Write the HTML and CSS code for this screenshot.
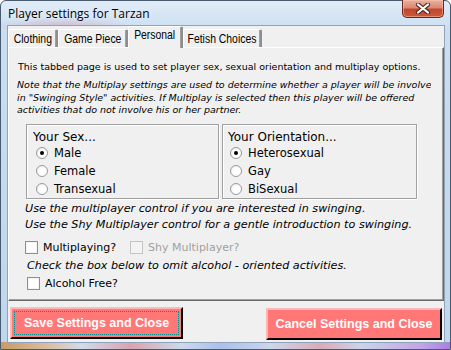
FILE: index.html
```html
<!DOCTYPE html>
<html lang="en">
<head>
    <meta charset="UTF-8">
    <title>Player settings for Tarzan</title>
    <link rel="stylesheet" href="styles.css">
</head>
<body>
    <div class="window">
        <div class="titlebar">
            <span class="title">Player settings for Tarzan</span>
            <div class="close-btn">
                <svg width="16" height="11" viewBox="0 0 16 11">
                    <path d="M3 1.5 L13 9.5 M13 1.5 L3 9.5" stroke="#4a2a24" stroke-width="4.2" stroke-linecap="round"/>
                    <path d="M3 1.5 L13 9.5 M13 1.5 L3 9.5" stroke="#ffffff" stroke-width="2.2" stroke-linecap="round"/>
                </svg>
            </div>
        </div>

        <div class="client">
            <div class="tabs">
                <div class="tab tab-clothing"><span>Clothing</span></div>
                <div class="tab tab-piece"><span>Game Piece</span></div>
                <div class="tab tab-personal active"><span>Personal</span></div>
                <div class="tab tab-fetish"><span>Fetish Choices</span></div>
            </div>

            <div class="tab-page">
                <p class="intro">This tabbed page is used to set player sex, sexual orientation and multiplay options.</p>
                <p class="note">Note that the Multiplay settings are used to determine whether a player will be involved<br>in "Swinging Style" activities. If Multiplay is selected then this player will be offered<br>activities that do not involve his or her partner.</p>

                <div class="groups">
                    <div class="group group-sex">
                        <div class="group-title">Your Sex...</div>
                        <label class="radio-row"><span class="radio checked"></span>Male</label>
                        <label class="radio-row"><span class="radio"></span>Female</label>
                        <label class="radio-row"><span class="radio"></span>Transexual</label>
                    </div>
                    <div class="group group-orient">
                        <div class="group-title">Your Orientation...</div>
                        <label class="radio-row"><span class="radio checked"></span>Heterosexual</label>
                        <label class="radio-row"><span class="radio"></span>Gay</label>
                        <label class="radio-row"><span class="radio"></span>BiSexual</label>
                    </div>
                </div>

                <p class="hint hint-multi">Use the multiplayer control if you are interested in swinging.</p>
                <p class="hint hint-shy">Use the Shy Multiplayer control for a gentle introduction to swinging.</p>

                <div class="check-row">
                    <label class="check"><span class="box"></span>Multiplaying?</label>
                    <label class="check disabled"><span class="box"></span>Shy Multiplayer?</label>
                </div>

                <p class="hint hint-alcohol">Check the box below to omit alcohol - oriented activities.</p>

                <div class="check-row alcohol-row">
                    <label class="check"><span class="box"></span>Alcohol Free?</label>
                </div>
            </div>

            <div class="buttons">
                <div class="btn btn-save"><span class="focus">Save Settings and Close</span></div>
                <div class="btn btn-cancel">Cancel Settings and Close</div>
            </div>
        </div>
    </div>
</body>
</html>
```

FILE: styles.css
```css
/* Base */
* {
    box-sizing: border-box;
    margin: 0;
    padding: 0;
}

body {
    width: 451px;
    height: 350px;
    overflow: hidden;
    font-family: "DejaVu Sans", Verdana, sans-serif;
    color: #000;
}

/* Window frame (Vista glass) */
.window {
    width: 451px;
    height: 350px;
    border: 1px solid #4a5a6e;
    border-radius: 6px 6px 0 0;
    background:
        radial-gradient(ellipse 70px 9px at 60px 25px, rgba(214, 120, 140, 0.35), rgba(214, 120, 140, 0)),
        linear-gradient(90deg, #c99a66 0px, #dcc0a4 50px, #cfdcec 80px, #dba2ae 130px, #ccdaec 180px, #abc0ea 220px, #ccd6ec 270px, #dcaab6 320px, #cad4ea 360px, #c4a4e6 420px, #a87ce4 451px) 0 341px / 100% 9px no-repeat,
        linear-gradient(180deg, #e0ecf8 0px, #cadef1 30px, #bfd6ec 340px);
    display: flex;
    flex-direction: column;
}

.titlebar {
    height: 25px;
    display: flex;
    align-items: flex-start;
    justify-content: space-between;
}

.title {
    font-family: "Open Sans", "Liberation Sans", sans-serif;
    font-size: 12px;
    margin: 4px 0 0 7px;
    color: #000;
    text-shadow: 0 0 6px rgba(255, 255, 255, 0.9);
}

.close-btn {
    width: 42px;
    height: 18px;
    margin: -1px 6px 0 0;
    border: 1px solid #6a2418;
    border-top: none;
    border-radius: 0 0 5px 5px;
    background: linear-gradient(180deg, #e8b0a0 0%, #d98a74 45%, #c4462e 55%, #c75a3c 100%);
    box-shadow: inset 0 0 0 1px rgba(255, 200, 180, 0.5);
    display: flex;
    align-items: center;
    justify-content: center;
}

/* Client area */
.client {
    width: 436px;
    height: 316px;
    margin-left: 7px;
    background: #f0f0f0;
    outline: 1px solid #8fa4bb;
    display: flex;
    flex-direction: column;
}

/* Tabs */
.tabs {
    height: 21px;
    display: flex;
    align-items: flex-end;
    font-family: "Liberation Sans", Arial, sans-serif;
    font-size: 13px;
    position: relative;
    z-index: 1;
}

.tab {
    height: 18px;
    border-top: 1px solid #fff;
    border-left: 1px solid #fff;
    border-right: 2px solid #8e8e8e;
    border-radius: 2px 2px 0 0;
    box-shadow: inset -1px 0 0 #a0a0a0;
    padding-top: 1px;
    text-align: center;
    white-space: nowrap;
    background: #f0f0f0;
    display: flex;
    justify-content: center;
}

.tab span {
    display: inline-block;
    transform: scaleX(0.8);
}

.tab-clothing { width: 50px; }
.tab-piece { width: 70px; }
.tab-personal { width: 55px; }
.tab-fetish { width: 79px; }

.tab.active {
    height: 22px;
    margin-bottom: -1px;
    padding-top: 0;
}

/* Tab page */
.tab-page {
    height: 254px;
    border-top: 1px solid #fff;
    border-left: 1px solid #fff;
    border-right: 1px solid #696969;
    border-bottom: 1px solid #696969;
    box-shadow: inset -1px -1px 0 #a0a0a0;
    font-size: 9.5px;
}

.intro {
    margin: 12px 0 0 9px;
    line-height: 13px;
    white-space: nowrap;
}

.note {
    margin: 6px 0 0 8px;
    width: 414px;
    height: 38px;
    overflow: hidden;
    white-space: nowrap;
    font-style: italic;
    line-height: 12.5px;
}

/* Group boxes */
.groups {
    display: flex;
    gap: 3px;
    margin: 7px 0 0 17px;
    font-size: 11.5px;
}

.group {
    height: 75px;
    border: 1px solid #a0a0a0;
    box-shadow: 1px 1px 0 #fff, inset 1px 1px 0 #fff;
    display: flex;
    flex-direction: column;
}

.group-sex { width: 193px; padding-left: 6px; }
.group-orient { width: 195px; padding-left: 5px; }

.group-title {
    margin-top: 6px;
    line-height: 13px;
    height: 13px;
    font-size: 12px;
}

.radio-row {
    height: 18.5px;
    display: flex;
    align-items: center;
}

.group-sex .radio-row { padding-left: 3px; }
.group-orient .radio-row { padding-left: 2px; }

.radio {
    width: 12px;
    height: 12px;
    margin-right: 6px;
    border-radius: 50%;
    border: 1px solid #9a9a9a;
    background: radial-gradient(circle at 60% 60%, #ffffff 40%, #e4e4e4 100%);
    position: relative;
}

.radio.checked::after {
    content: "";
    position: absolute;
    left: 3px;
    top: 3px;
    width: 4px;
    height: 4px;
    border-radius: 50%;
    background: #000;
}

/* Hints and checkboxes */
.hint {
    font-style: italic;
    font-size: 11.2px;
    line-height: 16px;
    white-space: nowrap;
}

.hint-multi { margin: 2px 0 0 16px; }
.hint-shy { margin-left: 16px; }
.hint-alcohol { margin: 1px 0 0 18px; }

.check-row {
    display: flex;
    height: 19px;
    align-items: center;
    margin: 5px 0 0 16px;
    font-size: 11px;
}

.alcohol-row { margin: 0 0 0 18px; }

.check {
    display: flex;
    align-items: center;
    margin-right: 14px;
}

.box {
    width: 13px;
    height: 13px;
    margin-right: 5px;
    border: 1px solid #8e8f8f;
    background: #fff;
    box-shadow: inset 0 0 0 1px #f4f4f4;
}

.check.disabled {
    color: #a0a0a0;
}

.check.disabled .box {
    border-color: #c4c4c4;
    background: #f4f4f4;
}

/* Bottom buttons */
.buttons {
    display: flex;
    justify-content: space-between;
    padding: 6px 2px 0 2px;
}

.btn {
    height: 32px;
    background: #ff7777;
    border-top: 2px solid #ffb8b8;
    border-left: 2px solid #ffb8b8;
    border-right: 2px solid #000;
    border-bottom: 2px solid #000;
    color: #fff;
    font-family: "Liberation Sans", Arial, sans-serif;
    font-weight: bold;
    font-size: 12.5px;
    display: flex;
    align-items: center;
    justify-content: center;
}

.btn-save {
    width: 173px;
    padding: 2px;
}

.btn-cancel {
    width: 176px;
    margin-top: 1px;
}

.focus {
    width: 100%;
    height: 100%;
    border: 1px dotted #008c8c;
    display: flex;
    align-items: center;
    justify-content: center;
}
```
